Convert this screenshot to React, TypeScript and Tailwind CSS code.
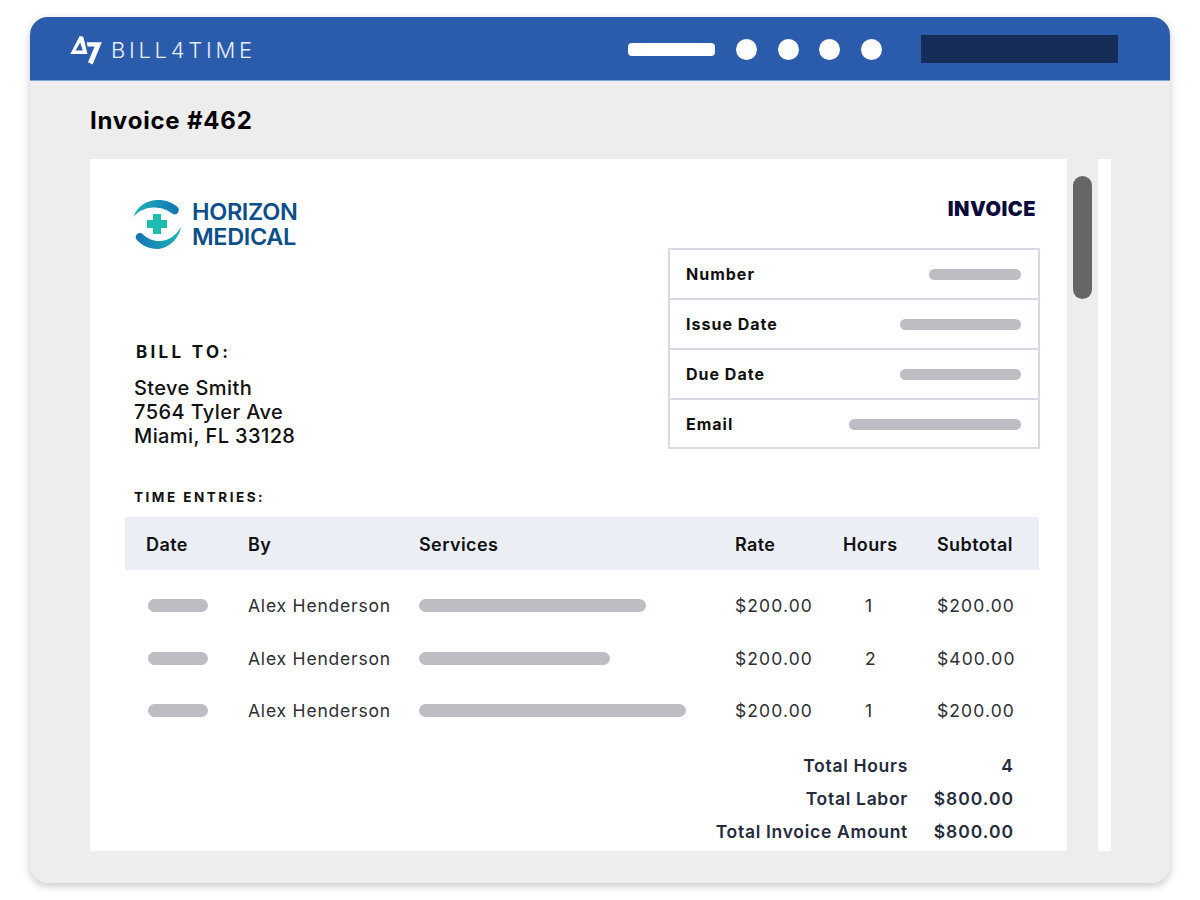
const font = { fontFamily: 'Inter, "Liberation Sans", sans-serif' };

function Bar({ w, h = 11 }: { w: number; h?: number }) {
  return <div className="rounded-full bg-[#bdbec3]" style={{ width: w, height: h }} />;
}

function Bill4TimeLogo() {
  return (
    <svg width="34" height="30" viewBox="0 0 34 30" className="shrink-0">
      <path fillRule="evenodd" d="M9.7 1 L13.3 1.7 L17.5 19 L0.3 19 Z M10.2 7.5 L5.6 15.5 L12.8 15.5 Z" fill="#fff" />
      <path d="M16.6 7.3 L31.8 7.3 L22.6 29.5 L18 27.2 L24.6 11.6 L17.6 11.6 Z" fill="#fff" />
    </svg>
  );
}

function HorizonLogo() {
  return (
    <svg width="50" height="52" viewBox="0 0 50 52" className="shrink-0 mt-[1px]">
      <defs>
        <linearGradient id="topArc" x1="0" y1="0" x2="1" y2="0">
          <stop offset="0" stopColor="#1fb4b8" />
          <stop offset="1" stopColor="#1273b3" />
        </linearGradient>
        <linearGradient id="bottomArc" x1="0" y1="0" x2="1" y2="0">
          <stop offset="0" stopColor="#1273b3" />
          <stop offset="1" stopColor="#1fb4b8" />
        </linearGradient>
      </defs>
      <path d="M0.5 19 C3.5 8.5 14 2 25 2 C33 2 40 4.5 45 9.5 C47.5 12.5 44 18 40 16 C34.5 12 28 9 20 9.5 C12 10 5 13 0.5 19 Z" fill="url(#topArc)" />
      <path d="M48 29 C46 41 35 51 24 51 C16 51 8 47 3.5 41.5 C1 38 5 33.5 9 35.5 C14.5 40.5 20 43.5 28 43 C36 42.5 43 37.5 48 29 Z" fill="url(#bottomArc)" />
      <path d="M20 16 H28 V22 H34 V30 H28 V36 H20 V30 H14 V22 H20 Z" fill="#1cbdae" />
    </svg>
  );
}

const meta = [
  ["Number", 92, "h-[50px] border-b-2 border-[#d7d9e3]"],
  ["Issue Date", 121, "h-[50px] border-b-2 border-[#d7d9e3]"],
  ["Due Date", 121, "h-[50px] border-b-2 border-[#d7d9e3]"],
  ["Email", 172, "h-[48px]"],
] as const;

const rows = [
  [227, "1", "$200.00"],
  [191, "2", "$400.00"],
  [267, "1", "$200.00"],
] as const;

const totals = [
  ["Total Hours", "4"],
  ["Total Labor", "$800.00"],
  ["Total Invoice Amount", "$800.00"],
];

const gridCols = "grid grid-cols-[102px_171px_316px_108px_94px_1fr] items-center";

export default function App() {
  return (
    <div className="w-[1200px] h-[900px] bg-white pt-[17px] px-[30px]" style={font}>
      <div className="w-[1140px] h-[866px] rounded-[18px] overflow-hidden bg-[#ededed] flex flex-col shadow-[0_3px_8px_rgba(0,0,0,0.22)]">
        <header className="h-[64px] bg-[#2a5cab] flex items-center pl-[40px] shrink-0 border-b border-[#7fa3d9]">
          <div className="w-[558px] flex items-center gap-[7px] mt-[2px]">
            <Bill4TimeLogo />
            <span className="text-[22px] leading-none tracking-[3.7px] font-light text-[#e6eef8] mt-[1px]">BILL4TIME</span>
          </div>
          <div className="w-[87px] h-[13px] rounded-[4px] bg-white mt-[1px]" />
          <div className="ml-[21px] flex gap-[20.6px] mt-[1px]">
            <div className="w-[21px] h-[21px] rounded-full bg-white" />
            <div className="w-[21px] h-[21px] rounded-full bg-white" />
            <div className="w-[21px] h-[21px] rounded-full bg-white" />
            <div className="w-[21px] h-[21px] rounded-full bg-white" />
          </div>
          <div className="ml-[39px] w-[197px] h-[28px] bg-[#172d59] mt-[1px]" />
        </header>

        <div className="flex-1 min-h-0 pl-[60px] flex flex-col">
          <h1 className="h-[78px] pt-[2px] flex items-center text-[24px] font-bold text-black shrink-0 tracking-[0.8px]">Invoice #462</h1>
          <div className="flex h-[692px]">
            <main className="w-[977px] bg-white relative pt-[37px]">
              <div className="flex justify-between pl-[43px] pr-[31px]">
                <div className="flex items-center gap-[9px] h-[54px]">
                  <HorizonLogo />
                  <div className="text-[23.5px] leading-[25px] font-semibold tracking-[-0.35px] text-[#0b4f8a] mt-[2px]">
                    <div>HORIZON</div>
                    <div>MEDICAL</div>
                  </div>
                </div>
                <div className="text-[20px] font-black text-[#0b0b3b] leading-none mt-[3px] tracking-[0.5px]">INVOICE</div>
              </div>

              <div className="flex justify-between pl-[46px] pr-[27px] -mt-[1px]">
                <div className="pt-[95px]">
                  <div className="text-[17px] font-bold tracking-[3.3px] text-[#111] leading-none">BILL TO:</div>
                  <div className="text-[20px] font-medium tracking-[0.4px] text-[#111] leading-[24px] mt-[15px] -ml-[2px]">
                    <div>Steve Smith</div>
                    <div>7564 Tyler Ave</div>
                    <div>Miami, FL 33128</div>
                  </div>
                </div>
                <div className="w-[372px] h-[201px] border-2 border-[#d7d9e3] bg-white mt-[-1px]">
                  {meta.map(([label, w, cls]) => (
                    <div key={label} className={`${cls} flex items-center justify-between pl-[16px] pr-[17px]`}>
                      <span className="text-[16px] font-bold tracking-[1px] text-[#111]">{label}</span>
                      <Bar w={w} />
                    </div>
                  ))}
                </div>
              </div>

              <div className="pl-[44px] mt-[42px] text-[13.5px] font-bold tracking-[2.5px] text-[#111] leading-none">TIME ENTRIES:</div>

              <div className={`${gridCols} ml-[35px] w-[914px] h-[53px] bg-[#ebeef5] mt-[12px] pl-[21px] pt-[3px] text-[18px] font-semibold tracking-[0.4px] text-[#111]`}>
                <div>Date</div>
                <div>By</div>
                <div>Services</div>
                <div>Rate</div>
                <div>Hours</div>
                <div>Subtotal</div>
              </div>

              <div className="ml-[35px] w-[914px] pt-[10px]">
                {rows.map(([w, hours, sub], i) => (
                  <div key={i} className={`${gridCols} h-[52.5px] pl-[21px] text-[17.5px] tracking-[0.8px] text-[#2e2e33]`}>
                    <div className="pl-[2px]"><Bar w={60} h={13} /></div>
                    <div className="mt-[1px]">Alex Henderson</div>
                    <div><Bar w={w} h={13} /></div>
                    <div className="mt-[1px] tracking-[1.1px]">$200.00</div>
                    <div className="pl-[22px] mt-[1px]">{hours}</div>
                    <div className="mt-[1px] tracking-[1.1px]">{sub}</div>
                  </div>
                ))}
              </div>

              <div className="mt-[12.5px] pr-[53px] flex flex-col items-end">
                {totals.map(([label, value]) => (
                  <div key={label} className="h-[33px] flex items-center text-[17.5px] font-semibold tracking-[0.7px] text-[#252b3c]">
                    <span>{label}</span>
                    <span className="w-[106px] text-right tracking-[1px]">{value}</span>
                  </div>
                ))}
              </div>
            </main>

            <div className="w-[19px] ml-[6px] pt-[17px] shrink-0">
              <div className="w-[19px] h-[123px] rounded-full bg-[#666666]" />
            </div>
            <div className="w-[13px] ml-[6px] bg-white shrink-0" />
          </div>
        </div>
      </div>
    </div>
  );
}
